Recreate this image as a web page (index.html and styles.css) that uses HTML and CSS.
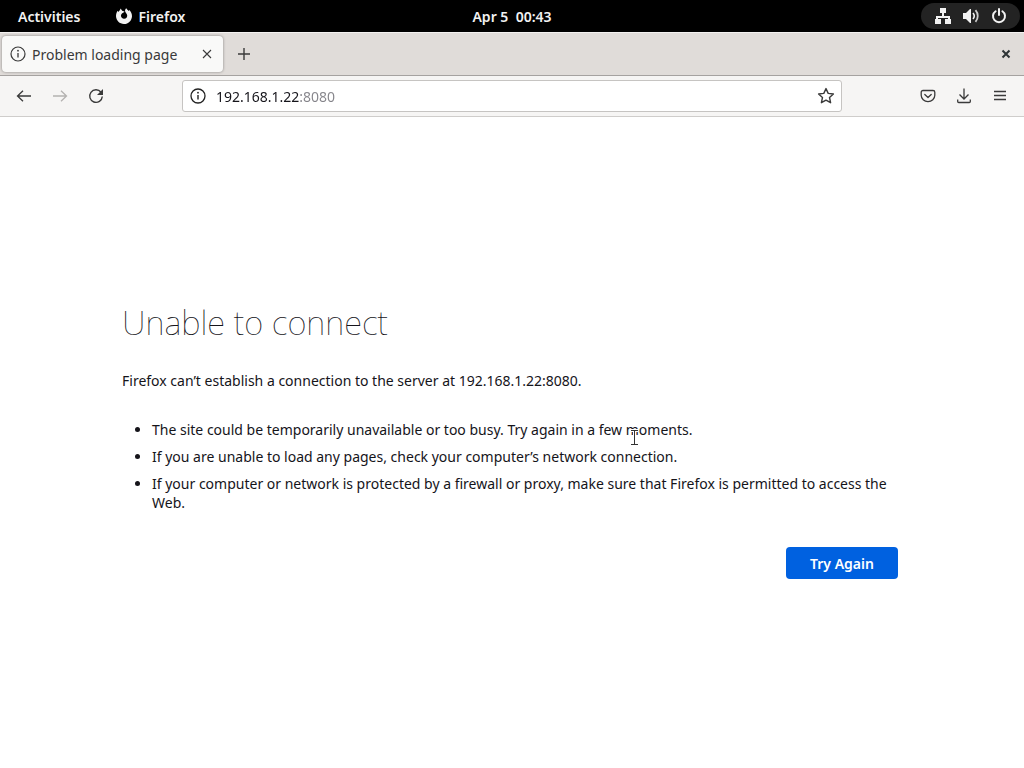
FILE: index.html
```html
<!doctype html>
<html lang="en">
<head>
  <meta charset="UTF-8">
  <meta name="viewport" content="width=device-width, initial-scale=1.0">
  <title>Problem loading page</title>
  <link rel="stylesheet" href="styles.css">
</head>
<body>
  <!-- Desktop top bar -->
  <header class="topbar">
    <div class="topbar-left">
      <button type="button" class="topbar-btn">Activities</button>
      <button type="button" class="topbar-btn app-menu">
        <svg width="16" height="16" viewBox="0 0 16 16">
          <path d="M4.600 .5L6.200 2.800C7 3.300 8 3.100 8.400 3.600C8.300 4.600 6.800 4.900 6.200 5.300C5.200 6.200 4.800 7.200 5 8.300C5.400 10 6.700 10.900 8.200 10.800C10.200 10.600 11.400 9 11.200 7.200C11 5.600 9.400 4.800 9.100 3.200C8.900 2 9.500 1 10.300 .3C10.900 1.500 11.800 2.200 12.700 2.900L13.400 1.900C15.200 3.700 16 5.900 16 8.200C15.800 12.600 12.400 16 8 16C3.600 16 .2 12.600 0 8.300C0 6.200 .6 4.300 1.600 2.800L2.300 4C3 2.900 4.300 2.200 4.600 .5Z" fill="#f2f2f2"/>
        </svg>
        Firefox
      </button>
    </div>
    <time class="clock">Apr 5&nbsp; 00:43</time>
    <div class="topbar-right">
      <button type="button" class="status" aria-label="System menu">
        <svg width="16" height="16" viewBox="0 0 16 16" fill="#f2f2f2">
          <path d="M5 0h6v5H9v3h6v3h1v5h-6v-5h3v-1H3v1h3v5H0v-5h1V8h6V5H5z"/>
        </svg>
        <svg width="18" height="16" viewBox="0 0 18 16">
          <path d="M1 5h3l4-4h1v14H8l-4-4H1z" fill="#f2f2f2"/>
          <path d="M11 5c1.5 1.8 1.5 4.2 0 6" fill="none" stroke="#f2f2f2" stroke-width="1.6"/>
          <path d="M13.5 2.2c3 3.4 3 8.2 0 11.6" fill="none" stroke="#ccc" stroke-width="1.8"/>
        </svg>
        <svg width="16" height="16" viewBox="0 0 16 16" fill="none" stroke="#f2f2f2" stroke-width="2" stroke-linecap="round">
          <path d="M4.6 3.2a6 6 0 1 0 6.8 0M8 1v6"/>
        </svg>
      </button>
    </div>
  </header>

  <!-- Tabs -->
  <div class="tabbar">
    <div class="tab">
      <svg width="16" height="16" viewBox="0 0 16 16">
        <circle cx="8" cy="8" r="7" fill="none" stroke="#3a3a3a" stroke-width="1.2"/>
        <path d="M8 7v4.5" stroke="#3a3a3a" stroke-width="1.3"/>
        <circle cx="8" cy="4.7" r="0.9" fill="#3a3a3a"/>
      </svg>
      <span class="tab-title">Problem loading page</span>
      <button type="button" class="icon-btn tab-close" aria-label="Close tab">
        <svg width="10" height="10" viewBox="0 0 10 10"><path d="M1 1l8 8M9 1L1 9" stroke="#3a3a3a" stroke-width="1.1"/></svg>
      </button>
    </div>
    <button type="button" class="icon-btn" aria-label="New tab">
      <svg width="14" height="14" viewBox="0 0 14 14"><path d="M7 1v12M1 7h12" stroke="#3a3a3a" stroke-width="1.4"/></svg>
    </button>
    <button type="button" class="icon-btn window-close" aria-label="Close window">
      <svg width="10" height="10" viewBox="0 0 10 10"><path d="M1.5 1.5l7 7M8.5 1.5l-7 7" stroke="#2e3436" stroke-width="2"/></svg>
    </button>
  </div>

  <!-- Navigation -->
  <nav class="toolbar">
    <div class="nav-buttons">
      <button type="button" class="icon-btn" aria-label="Back">
        <svg width="16" height="16" viewBox="0 0 16 16" fill="none" stroke="#3a3a3a" stroke-width="1.3"><path d="M15 8H1.5M7 2.8L1.5 8L7 13.2"/></svg>
      </button>
      <button type="button" class="icon-btn" aria-label="Forward" disabled>
        <svg width="16" height="16" viewBox="0 0 16 16" fill="none" stroke="#b4b2b0" stroke-width="1.3"><path d="M1 8h13.5M9 2.8L14.5 8L9 13.2"/></svg>
      </button>
      <button type="button" class="icon-btn" aria-label="Reload">
        <svg width="16" height="16" viewBox="0 0 16 16"><path d="M13 4.2A6.3 6.3 0 1 0 14.3 8.5" fill="none" stroke="#3a3a3a" stroke-width="1.4"/><path d="M15 1v6H9z" fill="#3a3a3a"/></svg>
      </button>
    </div>
    <div class="urlbar">
      <svg width="16" height="16" viewBox="0 0 16 16">
        <circle cx="8" cy="8" r="7" fill="none" stroke="#222" stroke-width="1.3"/>
        <path d="M8 7v4.5" stroke="#222" stroke-width="1.4"/>
        <circle cx="8" cy="4.7" r="0.9" fill="#222"/>
      </svg>
      <input type="text" class="url" aria-label="Address" value="192.168.1.22:8080" spellcheck="false">
      <button type="button" class="icon-btn" aria-label="Bookmark this page">
        <svg width="18" height="18" viewBox="0 0 18 18"><path d="M9 1.600l2.200 4.800 5.200.6-3.900 3.500 1.100 5.200L9 13.100l-4.600 2.600 1.100-5.200L1.600 7l5.200-.6z" fill="none" stroke="#3a3a3a" stroke-width="1.4" stroke-linejoin="round"/></svg>
      </button>
    </div>
    <div class="tools">
      <button type="button" class="icon-btn" aria-label="Save to Pocket">
        <svg width="16" height="16" viewBox="0 0 16 16" fill="none" stroke="#3a3a3a" stroke-width="1.3" stroke-linecap="round" stroke-linejoin="round"><path d="M3 2.5h10a1.8 1.8 0 0 1 1.8 1.8v3a6.800 6.300 0 0 1-13.600 0v-3A1.800 1.800 0 0 1 3 2.500zM4.800 6.500L8 9.500l3.200-3"/></svg>
      </button>
      <button type="button" class="icon-btn" aria-label="Downloads">
        <svg width="16" height="16" viewBox="0 0 16 16" fill="none" stroke="#3a3a3a" stroke-width="1.3"><path d="M8 .5v10.300M3.500 6.500L8 11l4.500-4.500M1.700 11.500v2a1 1 0 0 0 1 1h10.600a1 1 0 0 0 1-1v-2"/></svg>
      </button>
      <button type="button" class="icon-btn" aria-label="Open menu">
        <svg width="14" height="14" viewBox="0 0 14 14" stroke="#3a3a3a" stroke-width="1.3"><path d="M1 2.500h12M1 6.500h12M1 10.500h12"/></svg>
      </button>
    </div>
  </nav>

  <main class="page">
    <div class="error">
      <h1>Unable to connect</h1>
      <p>Firefox can’t establish a connection to the server at 192.168.1.22:8080.</p>
      <ul>
        <li>The site could be temporarily unavailable or too busy. Try again in a few moments.</li>
        <li>If you are unable to load any pages, check your computer’s network connection.</li>
        <li>If your computer or network is protected by a firewall or proxy, make sure that Firefox is permitted to access the Web.</li>
      </ul>
      <div class="actions">
        <button type="button" class="try-again">Try Again</button>
      </div>
    </div>
  </main>

  <!-- Mouse pointer -->
  <svg class="pointer" width="9" height="17" viewBox="0 0 9 17" fill="none">
    <path d="M1 1.5h7M1 15.5h7M4.5 1.5v14" stroke="#fff" stroke-width="3"/>
    <path d="M1 1.5h7M1 15.5h7M4.5 1.5v14" stroke="#333" stroke-width="1"/>
  </svg>
</body>
</html>
```
FILE: styles.css
```css
* {
  box-sizing: border-box;
}
body {
  margin: 0;
  min-height: 100vh;
  display: flex;
  flex-direction: column;
  background-color: #fff;
  color: #15141a;
  font-family: "Noto Sans", "Open Sans", sans-serif;
  font-size: 14px;
}
button {
  font: inherit;
  border: none;
  background: none;
  padding: 0;
  cursor: pointer;
}
svg {
  display: block;
  flex: none;
}
.topbar {
  height: 32px;
  display: grid;
  grid-template-columns: 1fr auto 1fr;
  align-items: center;
  background-color: #000;
  color: #f2f2f2;
  font-weight: 600;
}
.topbar-left {
  display: flex;
  gap: 36px;
  padding-left: 18px;
}
.topbar-btn {
  display: flex;
  align-items: center;
  gap: 6px;
  color: #f2f2f2;
  font-weight: 600;
}
.topbar-right {
  display: flex;
  justify-content: flex-end;
  padding-right: 4px;
}
.status {
  display: flex;
  align-items: center;
  gap: 11px;
  height: 26px;
  padding: 0 13px 0 14px;
  border-radius: 13px;
  background-color: #232323;
}
.tabbar {
  height: 44px;
  display: flex;
  align-items: center;
  padding: 0 6px 0 2px;
  background-color: #e0dcd9;
  border-top: 1px solid #f3f1f0;
  border-bottom: 1px solid #a5a2a0;
}
.tab {
  width: 221px;
  height: 36px;
  display: flex;
  align-items: center;
  padding: 0 4px 0 8px;
  margin-right: 9px;
  border-radius: 4px;
  background-color: #f9f9f8;
  box-shadow: 0 0 3px rgba(0, 0, 0, 0.4);
  color: #3a3a3a;
}
.tab-title {
  flex: 1;
  margin-left: 6px;
  white-space: nowrap;
}
.icon-btn {
  width: 24px;
  height: 24px;
  display: flex;
  align-items: center;
  justify-content: center;
}
.window-close {
  margin-left: auto;
}
.toolbar {
  height: 41px;
  display: grid;
  grid-template-columns: 1fr minmax(200px, 660px) 1fr;
  align-items: center;
  padding: 0 12px;
  background-color: #f6f5f4;
  border-bottom: 1px solid #cfcdcb;
}
.nav-buttons,
.tools {
  display: flex;
  gap: 12px;
}
.tools {
  justify-content: flex-end;
}
.urlbar {
  height: 32px;
  display: flex;
  align-items: center;
  gap: 10px;
  padding: 0 3px 0 7px;
  background-color: #fff;
  border: 1px solid #c6c4c2;
  border-radius: 3px;
}
.url {
  flex: 1;
  min-width: 0;
  padding: 0;
  border: none;
  outline: none;
  font: inherit;
  color: transparent;
  caret-color: #15141a;
  /* host dark, port dimmed */
  background: linear-gradient(to right, #15141a 84px, #85848a 84px);
  -webkit-background-clip: text;
  background-clip: text;
}
.page {
  flex: 1;
  display: flex;
  align-items: center;
  justify-content: center;
  padding: 0 48px;
}
.error {
  width: 100%;
  max-width: 780px;
}
h1 {
  margin: 0;
  font-size: 33px;
  font-weight: 100;
  line-height: 42px;
}
p {
  margin: 27px 0 30px;
  line-height: 19px;
}
ul {
  margin: 0;
  padding-left: 30px;
}
li {
  margin-bottom: 8px;
  line-height: 19px;
}
.actions {
  display: flex;
  justify-content: flex-end;
  padding: 27px 4px 4px;
}
.try-again {
  min-width: 112px;
  height: 32px;
  border-radius: 4px;
  background-color: #0061e0;
  color: #fff;
  font-weight: 600;
}
.try-again:hover {
  background-color: #0250bb;
}
.pointer {
  position: absolute;
  left: 630px;
  top: 429px;
}
```
